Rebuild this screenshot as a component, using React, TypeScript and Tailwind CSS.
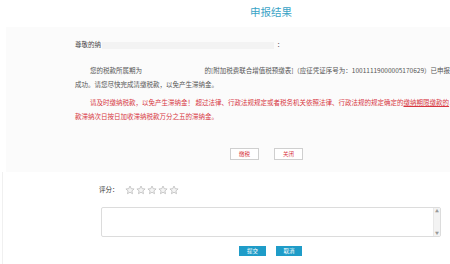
import React from "react";

const Star = () => (
  <svg width="10" height="10" viewBox="0 0 24 24">
    <path
      d="M12 2.5l2.9 6.3 6.9.7-5.2 4.6 1.5 6.8L12 17.4l-6.1 3.5 1.5-6.8-5.2-4.6 6.9-.7z"
      fill="#f4f4f4"
      stroke="#b9b9b9"
      strokeWidth="1.8"
      strokeLinejoin="round"
    />
  </svg>
);

export default function App() {
  return (
    <div className="w-[450px] h-[264px] overflow-hidden bg-white font-['Noto_Sans_CJK_SC',sans-serif] text-[6.5px] text-[#555]">
      {/* title */}
      <div className="h-[27px] pl-[250px] pt-[5px] text-[10.5px] leading-[14px] text-[#3aa3c6]">
        申报结果
      </div>

      {/* result panel */}
      <div className="ml-[6px] h-[145px] bg-[#fbfbfb] pl-[69px] pt-[12px] overflow-hidden">
        <div className="flex items-center h-[12px] whitespace-nowrap text-[#444]">
          <span>尊敬的纳</span>
          <span className="ml-[1px] h-[7px] w-[172px] bg-[#f3f3f3]" />
          <span className="ml-[3px]">：</span>
        </div>

        <div className="mt-[12px] leading-[14px] whitespace-nowrap">
          <div className="flex pl-[15px]">
            <span>您的税款所属期为</span>
            <span className="w-[86px]" />
            <span>
              的[附加税费联合增值税预缴表]（应征凭证序号为：10011119000005170629）已申报
            </span>
          </div>
          <div>成功。请您尽快完成清缴税款，以免产生滞纳金。</div>
        </div>

        <div className="mt-[4px] leading-[14px] whitespace-nowrap text-[#d7363f]">
          <div className="pl-[15px]">
            请及时缴纳税款，以免产生滞纳金！ 超过法律、行政法规规定或者税务机关依照法律、行政法规的规定确定的
            <span className="underline">缴纳期限缴款的</span>，将从
          </div>
          <div>款滞纳次日按日加收滞纳税款万分之五的滞纳金。</div>
        </div>

        <div className="mt-[25px] ml-[155px] flex gap-[15px]">
          <button className="w-[29px] h-[12px] border border-[#cfcfcf] bg-white text-[5.5px] leading-[10px] text-[#d7363f]">
            缴税
          </button>
          <button className="w-[29px] h-[12px] border border-[#cfcfcf] bg-white text-[5.5px] leading-[10px] text-[#d7363f]">
            关闭
          </button>
        </div>
      </div>

      {/* rating */}
      <div className="ml-[2px] border-l border-[#f0f0f0] pt-[12px] h-[92px]">
        <div className="flex items-center gap-[6px] pl-[96px] h-[11px]">
          <span className="text-[#333]">评分：</span>
          <div className="flex gap-[1px]">
            <Star />
            <Star />
            <Star />
            <Star />
            <Star />
          </div>
        </div>

        <div className="ml-[98px] mt-[12px] w-[340px] h-[30px] flex border border-[#dcdcdc] rounded-[2px] bg-white">
          <div className="flex-1" />
          <div className="w-[7px] flex flex-col justify-between items-center bg-[#f3f3f3] border-l border-[#e8e8e8] py-[1px] text-[4px] leading-[4px] text-[#999]">
            <span>▲</span>
            <span>▼</span>
          </div>
        </div>

        <div className="mt-[9px] ml-[236px] flex gap-[10px]">
          <button className="w-[27px] h-[10px] bg-[#1f9cc8] text-white text-[5.5px] leading-[10px]">
            提交
          </button>
          <button className="w-[26px] h-[10px] bg-[#1f9cc8] text-white text-[5.5px] leading-[10px]">
            取消
          </button>
        </div>
      </div>
    </div>
  );
}
